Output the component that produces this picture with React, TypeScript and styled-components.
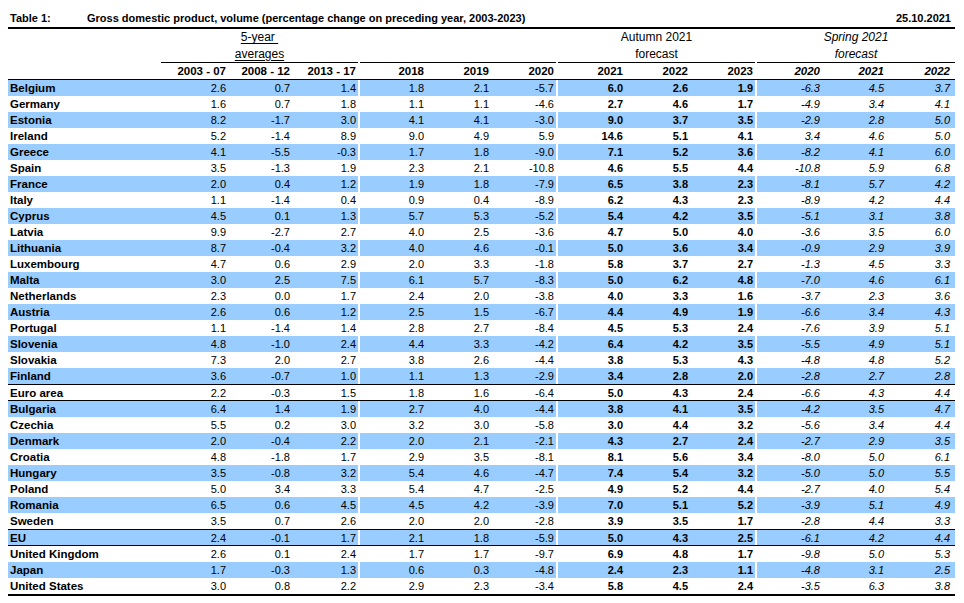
import React from 'react'
import styled, { createGlobalStyle, css } from 'styled-components'

type Variant = 'plain' | 'bold' | 'italic'

const groups: { widths: number[]; variant: Variant; years: string[]; pad?: number }[] = [
  { widths: [67, 64, 66], variant: 'plain', years: ['2003 - 07', '2008 - 12', '2013 - 17'] },
  { widths: [66, 65, 65], variant: 'plain', years: ['2018', '2019', '2020'] },
  { widths: [67, 65, 65], variant: 'bold', years: ['2021', '2022', '2023'] },
  { widths: [65, 64, 66], variant: 'italic', years: ['2020', '2021', '2022'], pad: 3 },
]

const rows: [string, string][] = [
  ['Belgium', '2.6 0.7 1.4 1.8 2.1 -5.7 6.0 2.6 1.9 -6.3 4.5 3.7'],
  ['Germany', '1.6 0.7 1.8 1.1 1.1 -4.6 2.7 4.6 1.7 -4.9 3.4 4.1'],
  ['Estonia', '8.2 -1.7 3.0 4.1 4.1 -3.0 9.0 3.7 3.5 -2.9 2.8 5.0'],
  ['Ireland', '5.2 -1.4 8.9 9.0 4.9 5.9 14.6 5.1 4.1 3.4 4.6 5.0'],
  ['Greece', '4.1 -5.5 -0.3 1.7 1.8 -9.0 7.1 5.2 3.6 -8.2 4.1 6.0'],
  ['Spain', '3.5 -1.3 1.9 2.3 2.1 -10.8 4.6 5.5 4.4 -10.8 5.9 6.8'],
  ['France', '2.0 0.4 1.2 1.9 1.8 -7.9 6.5 3.8 2.3 -8.1 5.7 4.2'],
  ['Italy', '1.1 -1.4 0.4 0.9 0.4 -8.9 6.2 4.3 2.3 -8.9 4.2 4.4'],
  ['Cyprus', '4.5 0.1 1.3 5.7 5.3 -5.2 5.4 4.2 3.5 -5.1 3.1 3.8'],
  ['Latvia', '9.9 -2.7 2.7 4.0 2.5 -3.6 4.7 5.0 4.0 -3.6 3.5 6.0'],
  ['Lithuania', '8.7 -0.4 3.2 4.0 4.6 -0.1 5.0 3.6 3.4 -0.9 2.9 3.9'],
  ['Luxembourg', '4.7 0.6 2.9 2.0 3.3 -1.8 5.8 3.7 2.7 -1.3 4.5 3.3'],
  ['Malta', '3.0 2.5 7.5 6.1 5.7 -8.3 5.0 6.2 4.8 -7.0 4.6 6.1'],
  ['Netherlands', '2.3 0.0 1.7 2.4 2.0 -3.8 4.0 3.3 1.6 -3.7 2.3 3.6'],
  ['Austria', '2.6 0.6 1.2 2.5 1.5 -6.7 4.4 4.9 1.9 -6.6 3.4 4.3'],
  ['Portugal', '1.1 -1.4 1.4 2.8 2.7 -8.4 4.5 5.3 2.4 -7.6 3.9 5.1'],
  ['Slovenia', '4.8 -1.0 2.4 4.4 3.3 -4.2 6.4 4.2 3.5 -5.5 4.9 5.1'],
  ['Slovakia', '7.3 2.0 2.7 3.8 2.6 -4.4 3.8 5.3 4.3 -4.8 4.8 5.2'],
  ['Finland', '3.6 -0.7 1.0 1.1 1.3 -2.9 3.4 2.8 2.0 -2.8 2.7 2.8'],
  ['Euro area', '2.2 -0.3 1.5 1.8 1.6 -6.4 5.0 4.3 2.4 -6.6 4.3 4.4'],
  ['Bulgaria', '6.4 1.4 1.9 2.7 4.0 -4.4 3.8 4.1 3.5 -4.2 3.5 4.7'],
  ['Czechia', '5.5 0.2 3.0 3.2 3.0 -5.8 3.0 4.4 3.2 -5.6 3.4 4.4'],
  ['Denmark', '2.0 -0.4 2.2 2.0 2.1 -2.1 4.3 2.7 2.4 -2.7 2.9 3.5'],
  ['Croatia', '4.8 -1.8 1.7 2.9 3.5 -8.1 8.1 5.6 3.4 -8.0 5.0 6.1'],
  ['Hungary', '3.5 -0.8 3.2 5.4 4.6 -4.7 7.4 5.4 3.2 -5.0 5.0 5.5'],
  ['Poland', '5.0 3.4 3.3 5.4 4.7 -2.5 4.9 5.2 4.4 -2.7 4.0 5.4'],
  ['Romania', '6.5 0.6 4.5 4.5 4.2 -3.9 7.0 5.1 5.2 -3.9 5.1 4.9'],
  ['Sweden', '3.5 0.7 2.6 2.0 2.0 -2.8 3.9 3.5 1.7 -2.8 4.4 3.3'],
  ['EU', '2.4 -0.1 1.7 2.1 1.8 -5.9 5.0 4.3 2.5 -6.1 4.2 4.4'],
  ['United Kingdom', '2.6 0.1 2.4 1.7 1.7 -9.7 6.9 4.8 1.7 -9.8 5.0 5.3'],
  ['Japan', '1.7 -0.3 1.3 0.6 0.3 -4.8 2.4 2.3 1.1 -4.8 3.1 2.5'],
  ['United States', '3.0 0.8 2.2 2.9 2.3 -3.4 5.8 4.5 2.4 -3.5 6.3 3.8'],
]

const ruled = ['Euro area', 'EU']

const GlobalStyle = createGlobalStyle`
  body {
    margin: 0;
    background: #fff;
    color: #000;
    font-family: "Liberation Sans", Arial, sans-serif;
    font-size: 11px;
  }
`

const Page = styled.div`
  width: 947px;
  padding-left: 8px;
`

const TitleBar = styled.div`
  display: flex;
  align-items: flex-end;
  height: 27px;
  padding-bottom: 2px;
  box-sizing: border-box;
  font-weight: bold;
  line-height: 13px;
`

const TableNo = styled.span`
  width: 77px;
  padding-left: 2px;
`

const Caption = styled.span`
  flex: 1;
`

const Stamp = styled.span`
  padding-right: 4px;
`

const Table = styled.div`
  border-top: 2px solid #000;
  border-bottom: 2px solid #000;
`

const HeadRow = styled.div`
  display: flex;
  height: 34px;
`

const Spacer = styled.div`
  width: 153px;
  flex: none;
`

const HeadGroup = styled.div<{ $w: number; $gap: boolean; $italic?: boolean }>`
  width: ${(p) => p.$w}px;
  margin-left: ${(p) => (p.$gap ? 2 : 0)}px;
  flex: none;
  box-sizing: border-box;
  border-bottom: 1px solid #000;
  text-align: center;
  font-size: 12px;
  line-height: 16.5px;
  font-style: ${(p) => (p.$italic ? 'italic' : 'normal')};
`

const Under = styled.span`
  text-decoration: underline;
  text-underline-offset: 2px;
`

const YearRow = styled.div`
  display: flex;
  height: 16px;
  border-bottom: 1px solid #000;
  font-weight: bold;
  font-size: 11.5px;
`

const Row = styled.div<{ $shaded: boolean; $ruled: boolean }>`
  --bg: ${(p) => (p.$shaded ? '#99ccff' : '#fff')};
  display: flex;
  height: 16px;
  ${(p) =>
    p.$ruled &&
    css`
      height: 15px;
      border-top: 1px solid #000;
      border-bottom: 1px solid #000;
    `}
`

const Name = styled.div`
  width: 153px;
  flex: none;
  box-sizing: border-box;
  padding-left: 2px;
  background: var(--bg, #fff);
  font-weight: bold;
  font-size: 11.5px;
  display: flex;
  align-items: center;
  white-space: nowrap;
`

const Group = styled.div<{ $gap: boolean; $variant: Variant; $pad?: number }>`
  display: flex;
  flex: none;
  margin-left: ${(p) => (p.$gap ? 2 : 0)}px;
  padding-right: ${(p) => p.$pad ?? 0}px;
  background: var(--bg, #fff);
  font-weight: ${(p) => (p.$variant === 'bold' ? 'bold' : 'inherit')};
  font-style: ${(p) => (p.$variant === 'italic' ? 'italic' : 'normal')};
`

const Cell = styled.div<{ $w: number }>`
  width: ${(p) => p.$w}px;
  box-sizing: border-box;
  padding-right: 2px;
  text-align: right;
  display: flex;
  align-items: center;
  justify-content: flex-end;
  white-space: nowrap;
`

const App: React.FC = () => {
  const sum = (a: number[]) => a.reduce((s, v) => s + v, 0)

  return (
    <Page>
      <GlobalStyle />
      <TitleBar>
        <TableNo>Table 1:</TableNo>
        <Caption>Gross domestic product, volume (percentage change on preceding year, 2003-2023)</Caption>
        <Stamp>25.10.2021</Stamp>
      </TitleBar>
      <Table>
        <HeadRow>
          <Spacer />
          <HeadGroup $w={sum(groups[0].widths)} $gap={false}>
            <Under>5-year&nbsp;</Under>
            <br />
            <Under>averages</Under>
          </HeadGroup>
          <HeadGroup $w={sum(groups[1].widths)} $gap />
          <HeadGroup $w={sum(groups[2].widths)} $gap>
            Autumn 2021
            <br />
            forecast
          </HeadGroup>
          <HeadGroup $w={sum(groups[3].widths) + 3} $gap $italic>
            Spring 2021
            <br />
            forecast
          </HeadGroup>
        </HeadRow>
        <YearRow>
          <Spacer />
          {groups.map((g, gi) => (
            <Group key={gi} $gap={gi > 0} $variant={g.variant === 'italic' ? 'italic' : 'plain'} $pad={g.pad}>
              {g.years.map((y, i) => (
                <Cell key={i} $w={g.widths[i]}>{y}</Cell>
              ))}
            </Group>
          ))}
        </YearRow>
        {rows.map(([name, line], ri) => {
          const values = line.split(' ')
          let k = 0
          return (
            <Row key={name} $shaded={ri % 2 === 0} $ruled={ruled.includes(name)}>
              <Name>{name}</Name>
              {groups.map((g, gi) => (
                <Group key={gi} $gap={gi > 0} $variant={g.variant} $pad={g.pad}>
                  {g.widths.map((w, i) => (
                    <Cell key={i} $w={w}>{values[k++]}</Cell>
                  ))}
                </Group>
              ))}
            </Row>
          )
        })}
      </Table>
    </Page>
  )
}

export default App
